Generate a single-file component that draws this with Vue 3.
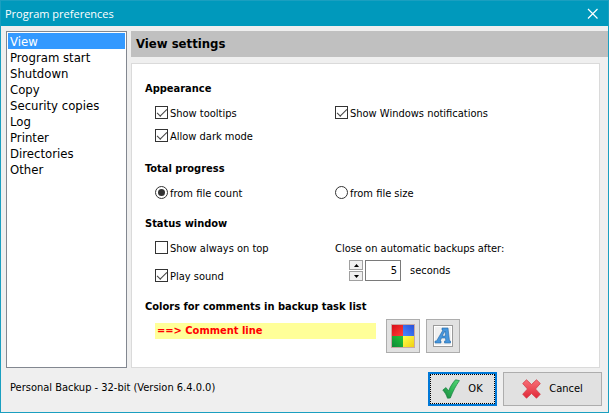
<script setup>
import { ref } from 'vue'

const pages = ['View', 'Program start', 'Shutdown', 'Copy', 'Security copies', 'Log', 'Printer', 'Directories', 'Other']
const activePage = ref('View')

const tooltips = ref(true)
const notifications = ref(true)
const darkMode = ref(true)
const progress = ref('count')
const onTop = ref(false)
const playSound = ref(true)
const closeDelay = ref(5) // seconds

function step(n) {
  closeDelay.value = Math.max(0, Number(closeDelay.value) + n)
}
</script>

<template>
  <div class="window">
    <header class="titlebar">
      <span>Program preferences</span>
      <button class="close" type="button" aria-label="Close">
        <svg width="12" height="12" viewBox="0 0 12 12">
          <path d="M1 1l9.500 9.500M10.500 1L1 10.500" stroke="#fff" stroke-width="1.2" fill="none" />
        </svg>
      </button>
    </header>

    <div class="body">
      <ul class="page-list">
        <li v-for="page in pages" :key="page" :class="{ selected: activePage === page }" @click="activePage = page">
          {{ page }}
        </li>
      </ul>

      <main class="content">
        <h1>View settings</h1>

        <form class="panel" @submit.prevent>
          <section class="appearance">
            <h2>Appearance</h2>
            <div class="options">
              <label><input v-model="tooltips" type="checkbox" />Show tooltips</label>
              <label><input v-model="notifications" type="checkbox" />Show Windows notifications</label>
              <label><input v-model="darkMode" type="checkbox" />Allow dark mode</label>
            </div>
          </section>

          <section>
            <h2>Total progress</h2>
            <div class="options">
              <label><input v-model="progress" type="radio" name="progress" value="count" />from file count</label>
              <label><input v-model="progress" type="radio" name="progress" value="size" />from file size</label>
            </div>
          </section>

          <section>
            <h2>Status window</h2>
            <div class="options">
              <div class="stack">
                <label><input v-model="onTop" type="checkbox" />Show always on top</label>
                <label><input v-model="playSound" type="checkbox" />Play sound</label>
              </div>
              <div>
                <label for="delay">Close on automatic backups after:</label>
                <div class="delay">
                  <div class="spin">
                    <button type="button" aria-label="More" @click="step(1)">
                      <svg width="5" height="3" viewBox="0 0 5 3"><path d="M0 3L2.500 0L5 3z" /></svg>
                    </button>
                    <button type="button" aria-label="Less" @click="step(-1)">
                      <svg width="5" height="3" viewBox="0 0 5 3"><path d="M0 0L2.500 3L5 0z" /></svg>
                    </button>
                  </div>
                  <input id="delay" v-model="closeDelay" type="text" />
                  <span>seconds</span>
                </div>
              </div>
            </div>
          </section>

          <section>
            <h2>Colors for comments in backup task list</h2>
            <div class="comment-row">
              <div class="comment">==&gt; Comment line</div>
              <button class="tool" type="button" aria-label="Background color">
                <svg width="24" height="24" viewBox="0 0 24 24">
                  <defs>
                    <linearGradient id="red" x1="0" y1="0" x2="1" y2="1">
                      <stop offset="0" stop-color="#d80c18" /><stop offset="1" stop-color="#ff4038" />
                    </linearGradient>
                    <linearGradient id="blue" x1="1" y1="0" x2="0" y2="1">
                      <stop offset="0" stop-color="#2850d8" /><stop offset="1" stop-color="#4888ff" />
                    </linearGradient>
                    <linearGradient id="green" x1="0" y1="1" x2="1" y2="0">
                      <stop offset="0" stop-color="#108838" /><stop offset="1" stop-color="#20c838" />
                    </linearGradient>
                    <linearGradient id="yellow" x1="1" y1="1" x2="0" y2="0">
                      <stop offset="0" stop-color="#f0d010" /><stop offset="1" stop-color="#ffff50" />
                    </linearGradient>
                  </defs>
                  <rect x=".5" y=".5" width="23" height="23" fill="#c09088" stroke="#c8a8a4" />
                  <rect x="1" y="1" width="11" height="11" fill="url(#red)" />
                  <rect x="12" y="1" width="11" height="11" fill="url(#blue)" />
                  <rect x="1" y="12" width="11" height="11" fill="url(#green)" />
                  <rect x="12" y="12" width="11" height="11" fill="url(#yellow)" />
                </svg>
              </button>
              <button class="tool" type="button" aria-label="Font">
                <svg width="20" height="22" viewBox="0 0 20 22">
                  <rect x=".5" y=".5" width="19" height="21" fill="#fff" stroke="#9a9a9a" />
                  <rect x="2" y="2" width="16" height="18" fill="#f0f0f0" />
                  <path
                    d="M11 3h4l1.500 13h1v2h-6v-2h1.300l-.3-3h-4l-1.300 3H8v2H2v-2h1.500L10 5H9V3zM12 6L9.200 11h3.300z"
                    fill="#4796dc" stroke="#2468a8" stroke-width=".6" fill-rule="evenodd" />
                </svg>
              </button>
            </div>
          </section>
        </form>
      </main>
    </div>

    <footer>
      <span class="version">Personal Backup - 32-bit (Version 6.4.0.0)</span>
      <button class="action ok" type="button">
        <svg width="18" height="20" viewBox="0 0 18 20">
          <defs>
            <linearGradient id="tick" x1="0" y1="1" x2="1" y2="0">
              <stop offset="0" stop-color="#18803c" /><stop offset=".5" stop-color="#30b858" /><stop offset="1" stop-color="#58d478" />
            </linearGradient>
          </defs>
          <path d="M.8 11L4 8.600L6.500 12C8.500 7.200 11 3.500 13.500 .8L17.400 1.600C14 6.500 11 12 8.300 19L5.500 19.200C4.500 16 3 13.500.8 11z" fill="url(#tick)" stroke="#168040" stroke-width=".7" />
        </svg>
        OK
      </button>
      <button class="action" type="button">
        <svg width="19" height="20" viewBox="0 0 19 20">
          <defs>
            <linearGradient id="cross" x1="0" y1="0" x2="0" y2="1">
              <stop offset="0" stop-color="#f87078" /><stop offset="1" stop-color="#e02838" />
            </linearGradient>
          </defs>
          <path d="M4.500 .8L9.500 5.500L14.500 .8L18.300 4.500L13.500 10L18.300 15.200L14.500 19.200L9.500 14.500L4.500 19.200L.7 15.200L5.500 10L.7 4.500z" fill="url(#cross)" stroke="#d43c48" stroke-width=".8" stroke-linejoin="round" />
        </svg>
        Cancel
      </button>
    </footer>
  </div>
</template>

<style>
body {
  margin: 0;
}
</style>

<style scoped>
* {
  box-sizing: border-box;
}

.window {
  display: flex;
  flex-direction: column;
  min-height: 100vh;
  border: 1px solid #1a9fc0;
  background: #efefef;
  color: #000;
  font-family: "DejaVu Sans Condensed", "DejaVu Sans", sans-serif;
  font-size: 11px;
  line-height: 16px;
}

button,
input {
  font: inherit;
  color: inherit;
  margin: 0;
  padding: 0;
}

svg {
  display: block;
}

.titlebar {
  display: flex;
  align-items: center;
  justify-content: space-between;
  height: 25px;
  padding: 0 9px 0 4px;
  background: #0099bc;
  color: #fff;
  font-family: "Open Sans", sans-serif;
  font-size: 11px;
}

.close {
  border: none;
  background: none;
}

.body {
  display: flex;
  flex: 1;
  gap: 4px;
  padding: 5px 0 0 5px;
}

.page-list {
  width: 121px;
  margin: 0;
  padding: 1px;
  border: 1px solid #828790;
  background: #fff;
  list-style: none;
  font-size: 13px;
  line-height: 15px;
}

.page-list li {
  padding: 1px 2px 0;
  cursor: default;
}

.page-list .selected {
  background: #3399ff;
  color: #fff;
}

.content {
  display: flex;
  flex: 1;
  flex-direction: column;
}

h1 {
  margin: 0;
  padding: 5px;
  background: #c0c0c0;
  font-size: 13px;
  line-height: 16px;
}

.panel {
  display: flex;
  flex: 1;
  flex-direction: column;
  gap: 15px;
  margin: 6px 8px 0 0;
  padding: 17px 13px 10px;
  border: 1px solid #dadada;
  background: #fff;
}

.appearance {
  margin-bottom: 2px;
}

h2 {
  margin: 0 0 8px;
  font-size: 11px;
  line-height: 16px;
}

.options {
  display: grid;
  grid-template-columns: 180px 1fr;
  row-gap: 7px;
  padding-left: 10px;
}

.stack {
  display: flex;
  flex-direction: column;
  gap: 12px;
}

label {
  display: flex;
  align-items: center;
  gap: 2px;
  padding-top: 1px;
  line-height: 15px;
}

input[type="checkbox"],
input[type="radio"] {
  display: grid;
  place-items: center;
  width: 13px;
  height: 13px;
  margin-bottom: 2px;
  appearance: none;
  border: 1px solid #333;
  background: #fff;
}

input[type="radio"] {
  border-radius: 50%;
}

input[type="checkbox"]:checked::before {
  content: "";
  width: 9px;
  height: 4px;
  border: solid #444;
  border-width: 0 0 1px 1px;
  transform: translateY(-1px) rotate(-45deg);
}

input[type="radio"]:checked::before {
  content: "";
  width: 7px;
  height: 7px;
  border-radius: 50%;
  background: #333;
}

.delay {
  display: flex;
  align-items: center;
  padding: 4px 0 0 14px;
}

.spin {
  display: flex;
  flex-direction: column;
  gap: 1px;
  margin-right: 2px;
}

.spin button {
  display: grid;
  place-items: center;
  width: 14px;
  height: 10px;
  border: 1px solid #a0a0a0;
  background: #f0f0f0;
}

#delay {
  width: 36px;
  height: 21px;
  margin-right: 9px;
  padding-right: 3px;
  border: 1px solid #7a7a7a;
  background: #fff;
  text-align: right;
}

.comment-row {
  display: flex;
  align-items: flex-start;
  gap: 6px;
  padding-left: 10px;
}

.comment {
  width: 221px;
  margin-right: 4px;
  padding-left: 2px;
  background: #ffff99;
  color: #f00;
  font-weight: bold;
}

.tool {
  display: grid;
  place-items: center;
  width: 34px;
  height: 34px;
  margin-top: -4px;
  border: 1px solid #adadad;
  background: #e1e1e1;
}

footer {
  display: flex;
  align-items: flex-start;
  gap: 6px;
  padding: 4px 6px 6px 9px;
}

.version {
  flex: 1;
  padding-top: 8px;
}

.action {
  display: flex;
  align-items: center;
  justify-content: center;
  gap: 8px;
  width: 99px;
  height: 34px;
  border: 1px solid #adadad;
  background: #e1e1e1;
}

.ok {
  width: 69px;
  border: 2px solid #0078d7;
  outline: 1px dotted #000;
  outline-offset: -3px;
}
</style>
